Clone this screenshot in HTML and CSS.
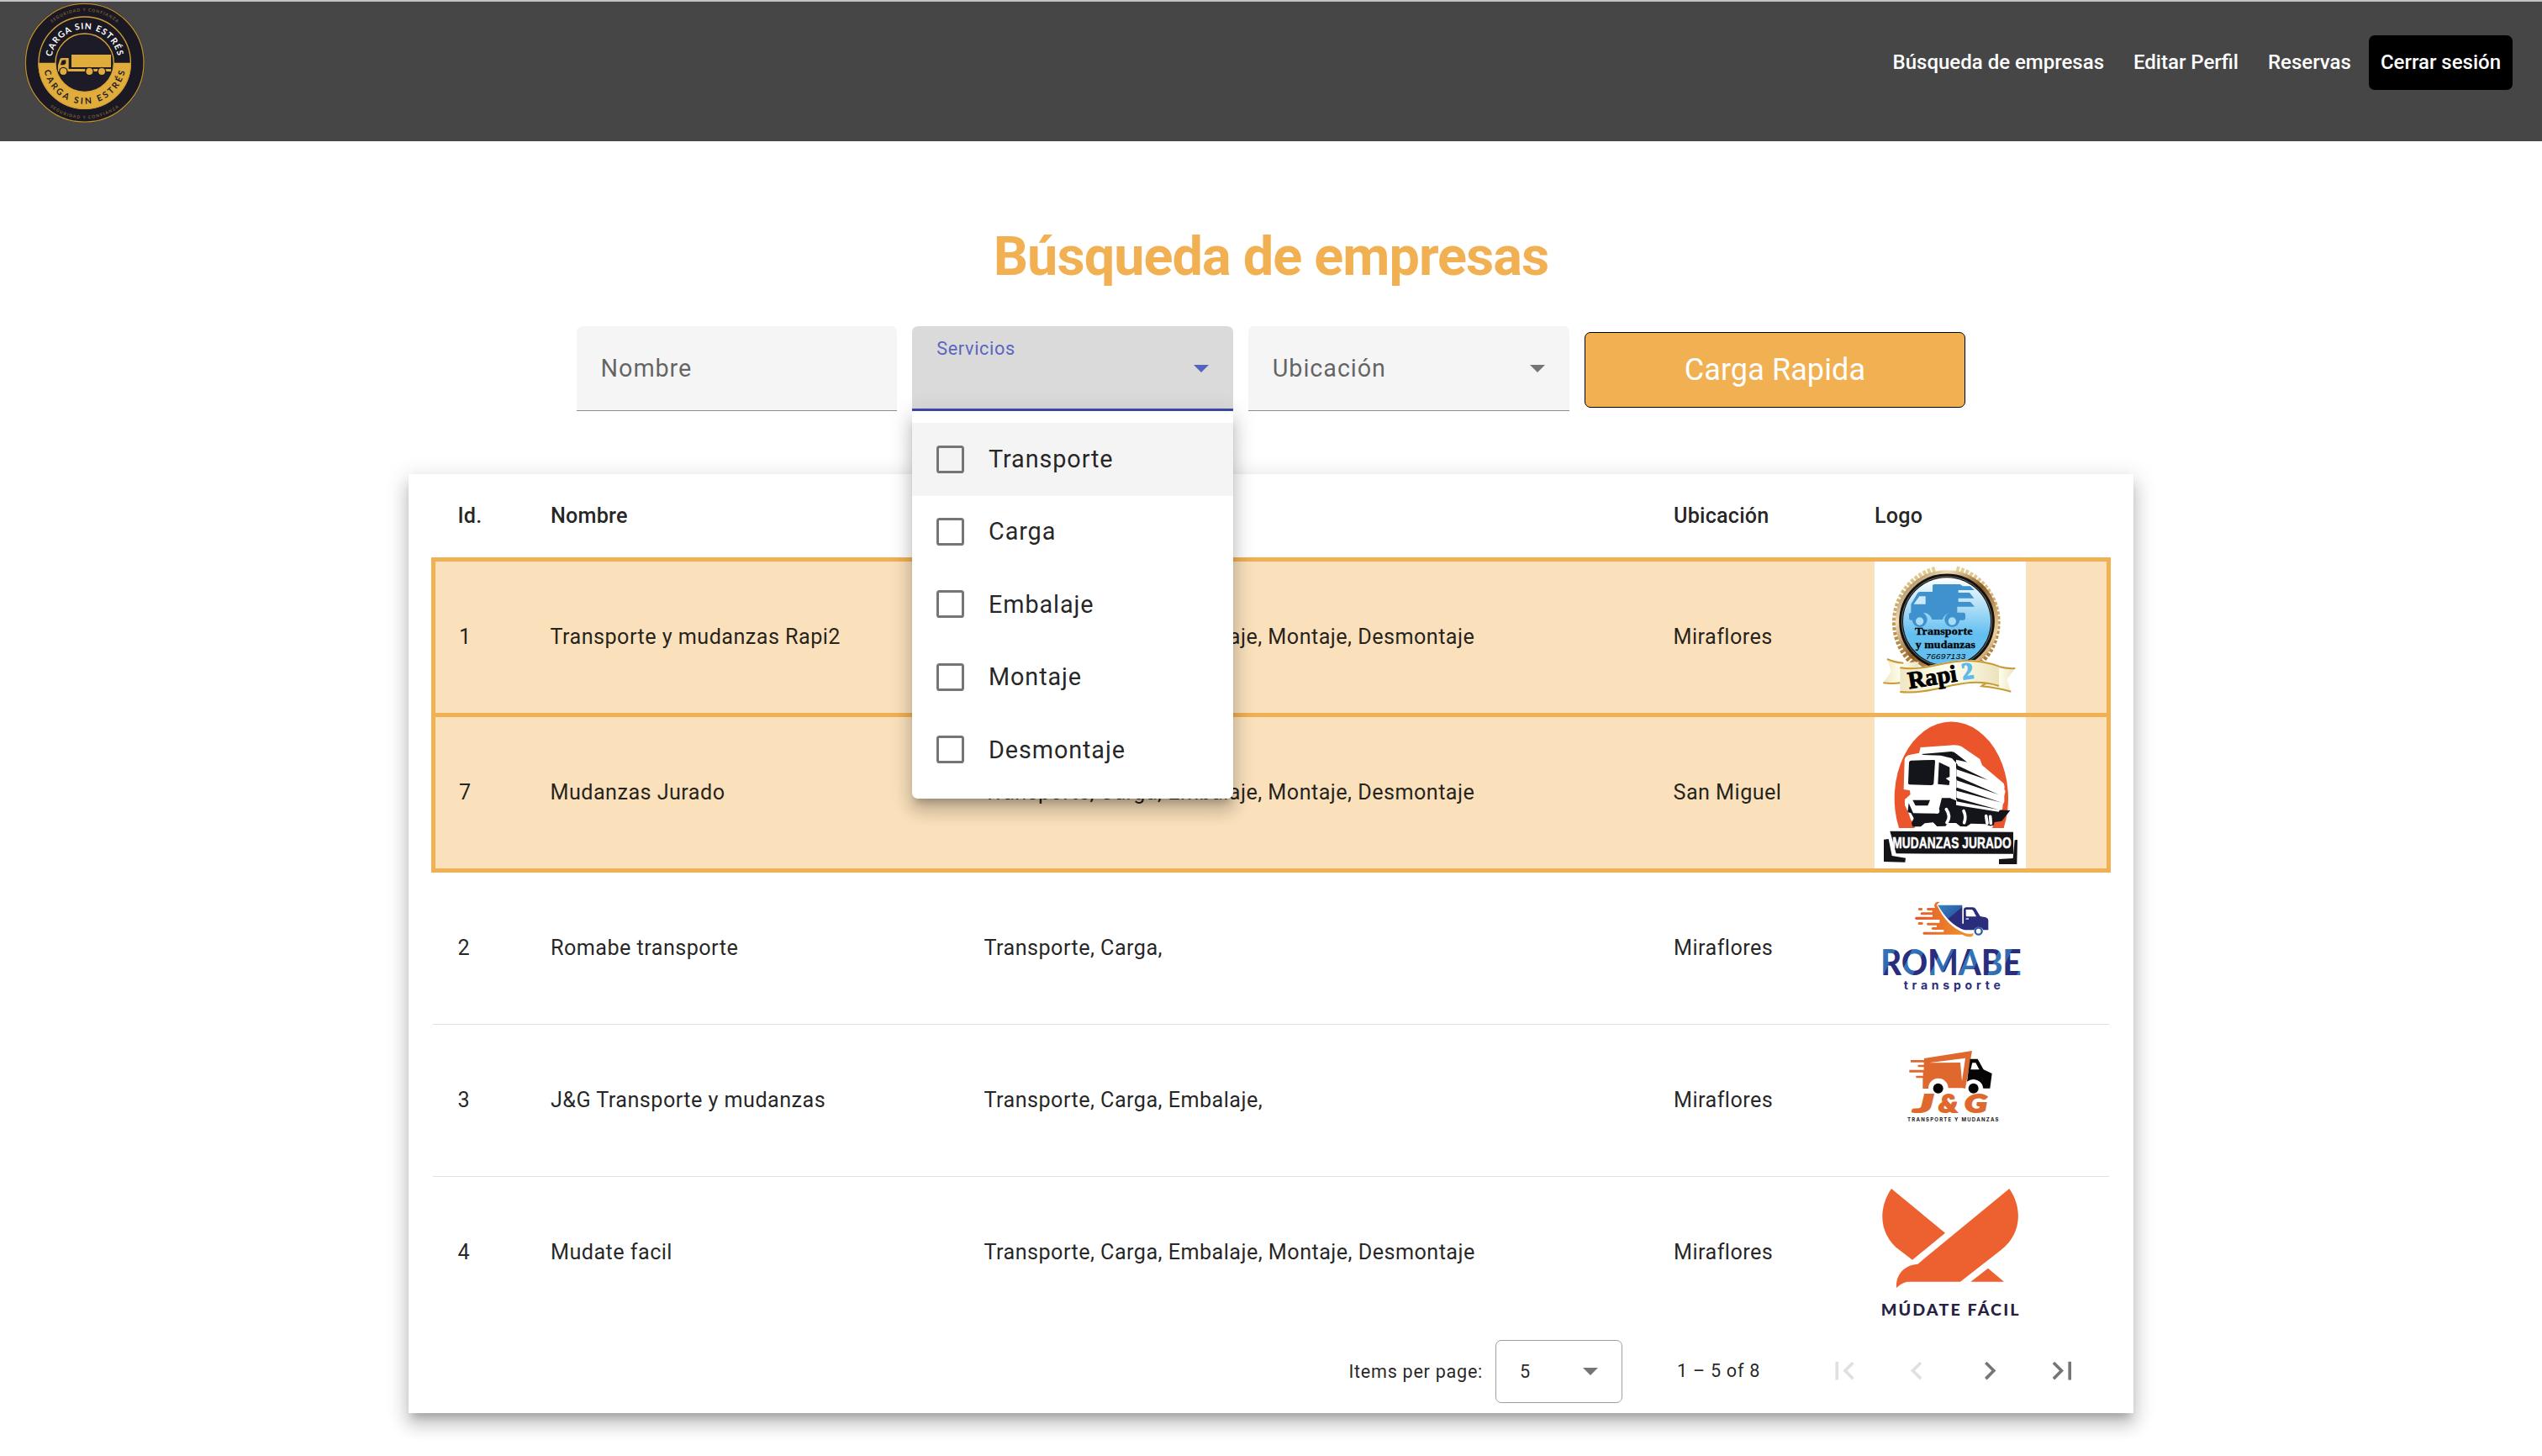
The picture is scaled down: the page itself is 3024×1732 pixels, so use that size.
FILE: index.html
```html
<!DOCTYPE html>
<html lang="es">
<head>
<meta charset="utf-8">
<title>Carga sin estrés</title>
<link rel="stylesheet" href="styles.css">
</head>
<body>
<header class="topbar">
  <svg class="brand" viewBox="88 9 430 430">
    <defs>
      <path id="arc-a" d="M185 202.1A120 120 0 0 1 421 202.1"/>
      <path id="arc-b" d="M158.7 252A147 147 0 0 0 447.3 252"/>
      <path id="arc-c" d="M186 82A184 184 0 0 1 420 82"/>
      <path id="arc-d" d="M180 381.6A200 200 0 0 0 426 381.6"/>
    </defs>
    <circle cx="303" cy="224" r="214" fill="#1a1823"/>
    <circle cx="303" cy="224" r="211" fill="none" stroke="#bd8f31" stroke-width="4"/>
    <path d="M137 224a166 166 0 0 0 332 0z" fill="#e0ac3b"/>
    <circle cx="303" cy="224" r="164" fill="none" stroke="#d09f37" stroke-width="4"/>
    <circle cx="303" cy="224" r="104" fill="#1d1b27" stroke="#d9a639" stroke-width="4"/>
    <g fill="#e0ac3b">
      <path d="M256 195h141v45H256zM215 211q2-4 8-4h23v39h59v9h-97v-22zM331 246h66v9h-66z"/>
      <path d="M217 230l5-15 14-1v13l-8 5h-12z" fill="#1d1b27"/>
      <g stroke="#1d1b27" stroke-width="4"><circle cx="227" cy="255" r="14"/><circle cx="320" cy="255" r="14"/><circle cx="364" cy="255" r="14"/></g>
    </g>
    <g font-family="Lato, sans-serif" font-weight="700">
      <text font-size="31" fill="#fff"><textPath href="#arc-a" textLength="330">CARGA SIN ESTRÉS</textPath></text>
      <text font-size="31" fill="#1d1b27"><textPath href="#arc-b" textLength="402">CARGA SIN ESTRÉS</textPath></text>
      <text font-size="15" fill="#7d602d"><textPath href="#arc-c" textLength="252">SEGURIDAD Y CONFIANZA</textPath></text>
      <text font-size="15" fill="#7d602d"><textPath href="#arc-d" textLength="263">SEGURIDAD Y CONFIANZA</textPath></text>
    </g>
  </svg>
  <nav class="nav">
    <a class="nav-link">Búsqueda de empresas</a>
    <a class="nav-link">Editar Perfil</a>
    <a class="nav-link">Reservas</a>
    <a class="nav-link nav-button">Cerrar sesión</a>
  </nav>
</header>

<main class="page">
  <h1 class="title">Búsqueda de empresas</h1>

  <form class="filters">
    <div class="field"><span class="label">Nombre</span></div>
    <div class="field active">
      <span class="label floating">Servicios</span>
      <svg class="arrow" viewBox="0 0 10 5"><path d="M0 0h10L5 5z"/></svg>
      <ul class="menu">
        <li class="option focused"><i class="check"></i><span>Transporte</span></li>
        <li class="option"><i class="check"></i><span>Carga</span></li>
        <li class="option"><i class="check"></i><span>Embalaje</span></li>
        <li class="option"><i class="check"></i><span>Montaje</span></li>
        <li class="option"><i class="check"></i><span>Desmontaje</span></li>
      </ul>
    </div>
    <div class="field">
      <span class="label">Ubicación</span>
      <svg class="arrow" viewBox="0 0 10 5"><path d="M0 0h10L5 5z"/></svg>
    </div>
    <button class="quick" type="button">Carga Rapida</button>
  </form>

  <section class="card">
    <div class="row head"><span>Id.</span><span>Nombre</span><span></span><span>Ubicación</span><span>Logo</span></div>

    <div class="row gold">
      <span class="id">1</span><span>Transporte y mudanzas Rapi2</span><span>Transporte, Carga, Embalaje, Montaje, Desmontaje</span><span>Miraflores</span>
      <svg class="logo" viewBox="90 54 540 540">
        <defs>
          <linearGradient id="sky" x1="0" y1="0" x2="0" y2="1"><stop offset="0" stop-color="#fff"/><stop offset=".65" stop-color="#62bff0"/></linearGradient>
          <linearGradient id="ring" x1="0" y1="0" x2="1" y2="1"><stop offset="0" stop-color="#7a4d1c"/><stop offset=".25" stop-color="#f3dfb4"/><stop offset=".5" stop-color="#8a5a26"/><stop offset=".8" stop-color="#efd09a"/><stop offset="1" stop-color="#7a4d1c"/></linearGradient>
          <linearGradient id="cream"><stop offset="0" stop-color="#efe7c2"/><stop offset=".5" stop-color="#fffff0"/><stop offset="1" stop-color="#ece3bd"/></linearGradient>
          <linearGradient id="wreath" x1="0" y1="0" x2="0" y2="1"><stop offset="0" stop-color="#e3cf92"/><stop offset="1" stop-color="#a9752f"/></linearGradient>
        </defs>
        <rect x="90" y="54" width="540" height="540" fill="#fff"/>
        <g fill="none" stroke="url(#wreath)">
          <path d="M240 428A192 196 0 0 1 312 80" stroke-width="20" stroke-dasharray="11 6"/>
          <path d="M455 425A192 196 0 0 0 382 80" stroke-width="20" stroke-dasharray="11 6"/>
        </g>
        <circle cx="348" cy="268" r="177" fill="#111" stroke="url(#ring)" stroke-width="13"/>
        <circle cx="348" cy="268" r="161" fill="none" stroke="#77736c" stroke-width="3"/>
        <circle cx="348" cy="268" r="156" fill="url(#sky)"/>
        <g fill="#3f92cd">
          <path d="M297 142q0-7 8-7h90l10 7h26l16 14h-58v9h40l16 20h-56v13h43l15 17h-62v21h22q7 0 7 8v11q0 8-8 8h-14a30 30 0 0 0-59-2h-38a30 30 0 0 0-59 2h-16q-7 0-7-8v-12q0-7 7-7v-30l24-40q4-4 10-4h43z"/>
          <path d="M230 206l20-28h22v28z" fill="#cdeafb"/>
          <circle cx="251" cy="261" r="27"/><circle cx="367" cy="261" r="27"/>
          <g fill="#a9dcf7"><circle cx="251" cy="267" r="14"/><circle cx="367" cy="267" r="14"/></g>
        </g>
        <g font-family="'Liberation Serif', serif" font-weight="700" fill="#050505" stroke="#050505">
          <text x="234" y="314" font-size="36" textLength="206" lengthAdjust="spacingAndGlyphs">Transporte</text>
          <text x="236" y="362" font-size="36" textLength="214" lengthAdjust="spacingAndGlyphs">y mudanzas</text>
        </g>
        <text x="273" y="401" font-family="'Liberation Sans', sans-serif" font-style="italic" font-size="29" textLength="142" lengthAdjust="spacingAndGlyphs">76697133</text>
        <g fill="url(#cream)">
          <path d="M135 402q50 18 112 10v72q-70 12-126 3l28-40z"/>
          <path d="M470 425q60 16 122 10l-30 40 15 45q-50-14-107-20z"/>
          <path d="M181 430c120 18 200-60 353-5v76c-130-42-220 34-353 21z"/>
        </g>
        <g fill="none" stroke="#c89a35" stroke-width="6">
          <path d="M135 402q25 12 58 14M121 487q30 4 60 0M534 429q30 8 58 6M577 518q-50-14-105-19l16-12"/>
          <path d="M181 433c120 18 200-60 353-5M181 519c133 13 223-63 353-21"/>
        </g>
        <g font-family="'Liberation Serif', serif" font-weight="700" transform="rotate(-9 300 470)">
          <text x="209" y="494" font-size="86" textLength="176" lengthAdjust="spacingAndGlyphs" stroke="#000" stroke-width="3">Rapi</text>
          <text x="403" y="492" font-size="84" fill="#5fb9ea" stroke="#5fb9ea" stroke-width="4">2</text>
        </g>
      </svg>
    </div>

    <div class="row gold">
      <span class="id">7</span><span>Mudanzas Jurado</span><span>Transporte, Carga, Embalaje, Montaje, Desmontaje</span><span>San Miguel</span>
      <svg class="logo" viewBox="90 609 540 540">
        <rect x="90" y="609" width="540" height="540" fill="#fff"/>
        <path d="M177 1005A203 273 0 1 1 551 1005Z" fill="#ea552b"/>
        <path d="M197 765q0-14 14-20l38-8 5-20 120-8q20 0 34 10l58 40 8 22 74 62q8 10 5 24l4 6-4 18v20l-5 10-2 18-22 16-14 50H232l8-14-20-14-8-24-14-30v-20l20-18-2-14-22-4z" fill="#fff"/>
        <path d="M213 770q2-6 8-6l80-2q6 0 5 6l-5 78q-1 6-8 6l-78-2q-6 0-5-6z" fill="#14151a"/>
        <path d="M258 741l106-9q10 0 18 8l60 47-61-26v153l138 26 55 2-30 38-26 4-2 10q-14 8-30-3l-52-2-16 11-22-1-15-12h-28l-10 11-30 1-14-14-30 3-14 12h-29l-4-12 8-18-10-18-12-4 4-32 16 36 88 1 14-55h29l26 10 1-130-20-22-40-10-62-2z" fill="#14151a"/>
        <path d="M320 770l38 18v34l-14 6 14 10-2 14-40-4z" fill="#14151a"/>
        <path d="M226 905h62l-8 20h-44z" fill="#14151a"/>
        <path d="M382 761l60 14 110 72-2 12zM382 792l168 85-3 14-165-68zM382 829l165 72-3 14-162-52zM382 869l162 52-4 14-158-38zM381 903l158 34-6 10-152-24z" fill="#fff"/>
        <path d="M383 780l112 54-112-38zM383 820l150 66-150-51zM383 860l160 54-160-42zM383 898l150 42-150-30z" fill="#14151a"/>
        <g fill="none" stroke="#fff" stroke-width="11" stroke-linecap="round"><path d="M346 938q18 26 2 48M408 944q10 20 2 42M488 962l4 26M503 964l2 24"/></g>
        <circle cx="313" cy="944" r="9" fill="#fff"/>
        <path d="M145 1016l440 3v78l-418-1zM123 1046l17-2 12 60 49 8-2 15-76-2zM590 1048l10-1-2 87h-64v-18l50-3z" fill="#131318"/>
        <text x="154" y="1077" font-family="'Liberation Sans', sans-serif" font-weight="700" font-size="57" fill="#fff" stroke="#fff" stroke-width="1.5" textLength="424" lengthAdjust="spacingAndGlyphs">MUDANZAS JURADO</text>
      </svg>
    </div>

    <div class="row">
      <span>2</span><span>Romabe transporte</span><span>Transporte, Carga,</span><span>Miraflores</span>
      <svg class="logo" viewBox="90 -6 540 540">
        <defs>
          <linearGradient id="blue" x1="0" y1="0" x2="1" y2=".6"><stop offset="0" stop-color="#3584c4"/><stop offset=".38" stop-color="#2f5fa9"/><stop offset=".4" stop-color="#2a2c7c"/><stop offset="1" stop-color="#2a2c7c"/></linearGradient>
          <linearGradient id="flame"><stop offset="0" stop-color="#e3592a"/><stop offset="1" stop-color="#f0982c"/></linearGradient>
          <linearGradient id="letters" gradientUnits="userSpaceOnUse" x1="120" y1="270" x2="205" y2="310" spreadMethod="repeat"><stop offset="0" stop-color="#3378bb"/><stop offset=".42" stop-color="#2f67ae"/><stop offset=".44" stop-color="#2a2c7c"/><stop offset="1" stop-color="#2a2c7c"/></linearGradient>
        </defs>
        <path d="M325 100Q314 101 314 112C335 160 370 195 410 209Q430 216 442 210Q444 218 438 222Q425 227 402 215H266Q258 211 266 206H337V198H297Q289 194 297 189H312V182H280Q272 178 280 173H322V162H238Q230 157 238 152H297V145H258Q250 141 258 136H296V129H280Q272 125 280 120H306Q300 108 308 101Q316 96 325 100Z" fill="url(#flame)"/>
        <g fill="#e5702a"><rect x="246" y="120" width="15" height="9" rx="4"/><rect x="245" y="171" width="18" height="9" rx="4"/></g>
        <path d="M316 110h87v66h5v-48q0-10 10-10h22q8 0 12 7l15 25 20 4q9 3 9 12v33h-18a18 18 0 0 0-33 0h-34q-54-18-95-89z" fill="url(#blue)" stroke="#fff" stroke-width="6" paint-order="stroke"/>
        <path d="M416 126h20q4 0 7 5l10 20h-33q-4 0-4-5z" fill="#fff"/>
        <path d="M416 159h10" stroke="#fff" stroke-width="4"/>
        <circle cx="461" cy="203" r="12" fill="#fff" stroke="#2b5ca5" stroke-width="7"/>
        <text x="112" y="359" font-family="Lato, sans-serif" font-weight="900" font-size="127" fill="url(#letters)" textLength="502" lengthAdjust="spacingAndGlyphs">ROMABE</text>
        <text x="194" y="412" font-family="Inter, sans-serif" font-weight="700" font-size="42" fill="#2b2f7e" textLength="346">transporte</text>
      </svg>
    </div>

    <div class="row">
      <span>3</span><span>J&amp;G Transporte y mudanzas</span><span>Transporte, Carga, Embalaje,</span><span>Miraflores</span>
      <svg class="logo" viewBox="90 538 540 540">
        <path d="M267 658l171-27-24 134h-4a37 37 0 0 0-7-1h-50a35 35 0 0 0-71 2h-20v-38h-24v-8h25v-12h-49v-9h52v-10h-21v-8h21v-9h-47v-8h48z" fill="#de682d"/>
        <path d="M284 674l130-17-12 82-6-66z" fill="#fff"/>
        <path d="M431 660h27l21 38 30 14-7 53h-24a36 36 0 0 0-58-24z" fill="#050505"/>
        <path d="M439 674h12l13 24h-31z" fill="#fff"/>
        <circle cx="317" cy="765" r="18" fill="#050505"/><circle cx="443" cy="765" r="18" fill="#050505"/>
        <g font-family="Lato, sans-serif" font-style="italic" font-weight="900" font-size="88" fill="#de682d" stroke="#de682d" stroke-width="6">
          <text x="230" y="851" textLength="70" lengthAdjust="spacingAndGlyphs">J</text>
          <text x="319" y="851" textLength="68" lengthAdjust="spacingAndGlyphs">&amp;</text>
          <text x="412" y="851" textLength="80" lengthAdjust="spacingAndGlyphs">G</text>
        </g>
        <text x="207" y="883" font-family="Inter, sans-serif" font-weight="700" font-size="18" fill="#1b1b1b" textLength="326">TRANSPORTE Y MUDANZAS</text>
      </svg>
    </div>

    <div class="row last">
      <span>4</span><span>Mudate facil</span><span>Transporte, Carga, Embalaje, Montaje, Desmontaje</span><span>Miraflores</span>
      <svg class="logo" viewBox="90 60 540 540">
        <g fill="#ec612f">
          <path d="M150 102L342 260 225 356 180 322C110 270 98 180 150 102z"/>
          <path d="M571 102C624 180 608 270 542 320L396 434H207Q186 438 168 456C164 410 196 374 244 371z"/>
          <path d="M495 386l57 48H433z"/>
        </g>
        <text x="113" y="556" font-family="Lato, sans-serif" font-weight="900" font-size="59" fill="#25233f" textLength="492">MÚDATE FÁCIL</text>
      </svg>
    </div>

    <footer class="paginator">
      <span class="per-page">Items per page:</span>
      <div class="size"><span>5</span><svg class="arrow" viewBox="0 0 10 5"><path d="M0 0h10L5 5z"/></svg></div>
      <span class="range">1 – 5 of 8</span>
      <svg class="step off" viewBox="0 0 24 24"><path d="M18.41 16.59L13.82 12l4.59-4.59L17 6l-6 6 6 6zM6 6h2v12H6z"/></svg>
      <svg class="step off" viewBox="0 0 24 24"><path d="M15.41 7.41L14 6l-6 6 6 6 1.41-1.41L10.83 12z"/></svg>
      <svg class="step" viewBox="0 0 24 24"><path d="M10 6L8.59 7.41 13.17 12l-4.58 4.59L10 18l6-6z"/></svg>
      <svg class="step" viewBox="0 0 24 24"><path d="M5.59 7.41L10.18 12l-4.59 4.59L7 18l6-6-6-6zM16 6h2v12h-2z"/></svg>
    </footer>
  </section>
</main>
</body>
</html>
```
FILE: styles.css
```css
* { box-sizing: border-box; }

body {
  margin: 0;
  background: #fff;
  color: rgba(0, 0, 0, .87);
  font-family: Roboto, sans-serif;
}

.topbar {
  display: flex;
  justify-content: space-between;
  height: 168px;
  padding: 1px 35px 0 29px;
  border-top: 2px solid #c4c4c6;
  background: #464646;
}

.brand { width: 143.4px; height: 143.4px; }

.nav { display: flex; gap: 35px; margin-top: 39px; height: 65px; }

.nav-link {
  color: #fff;
  font-size: 24px;
  font-weight: 500;
  line-height: 64px;
  white-space: nowrap;
}

.nav-button {
  margin-left: -14px;
  padding: 0 14px;
  border-radius: 7px;
  background: #000;
}

.page {
  display: flex;
  flex-direction: column;
  align-items: center;
  height: 1564px;
}

.title {
  margin: 99px 0 45px;
  color: #f1b052;
  font-size: 64.8px;
  font-weight: 700;
  line-height: 76px;
  letter-spacing: -1px;
}

.filters { display: flex; align-items: flex-start; gap: 18px; height: 101px; }

.field {
  position: relative;
  display: flex;
  align-items: center;
  justify-content: space-between;
  width: 381.6px;
  height: 101px;
  padding: 0 28.8px;
  border-bottom: 1.8px solid #8c8c8c;
  border-radius: 7px 7px 0 0;
  background: #f5f5f5;
}

.label {
  color: rgba(0, 0, 0, .6);
  font-size: 28.8px;
  line-height: 40px;
  letter-spacing: .9px;
}

.field.active { border-bottom: 3.6px solid #3f4cab; background: #dadada; }

.label.floating {
  align-self: flex-start;
  margin-top: 7px;
  color: #5a66bd;
  font-size: 21.6px;
  letter-spacing: .68px;
}

.arrow { width: 18px; height: 9px; fill: #757575; }
.field.active .arrow { fill: #5463bb; margin-top: 3px; }

.menu {
  position: absolute;
  z-index: 2;
  top: 101px;
  left: 0;
  width: 100%;
  margin: 0;
  padding: 14.4px 0;
  border-radius: 0 0 7px 7px;
  background: #fff;
  box-shadow: 0 9px 9px -5.4px rgba(0, 0, 0, .2), 0 14.4px 18px 1.8px rgba(0, 0, 0, .14), 0 5.4px 25.2px 3.6px rgba(0, 0, 0, .12);
  list-style: none;
}

.option {
  display: flex;
  align-items: center;
  gap: 28.8px;
  height: 86.4px;
  padding: 0 28.8px 1px;
  font-size: 28.8px;
  letter-spacing: .9px;
}

.option.focused { background: #f4f4f4; }

.check {
  width: 33px;
  height: 33px;
  border: 3px solid #757575;
  border-radius: 3.6px;
}

.quick {
  width: 453.6px;
  height: 90px;
  margin-top: 7px;
  padding: 0;
  border: 1px solid #000;
  border-radius: 7px;
  background: #f1b052;
  color: #fff;
  font: 400 36px Roboto, sans-serif;
  letter-spacing: .1px;
}

.card {
  flex: none;
  width: 2052px;
  height: 1117px;
  margin-top: 75px;
  padding: 0 27px;
  background: #fff;
  box-shadow: 0 9px 9px -5.4px rgba(0, 0, 0, .2), 0 14.4px 18px 1.8px rgba(0, 0, 0, .14), 0 5.4px 25.2px 3.6px rgba(0, 0, 0, .12);
}

.row {
  display: grid;
  grid-template-columns: 110.5px 515.5px 820.5px 239px 180px;
  align-items: center;
  height: 181px;
  margin: 0 2px;
  padding-left: 29.5px;
  border-bottom: 1.5px solid #e0e0e0;
  font-size: 25.2px;
  letter-spacing: .45px;
  white-space: nowrap;
}

.row > span { padding-bottom: 1px; }

.row.head {
  height: 99px;
  border: 0;
  font-weight: 500;
  letter-spacing: .2px;
}

.row.gold {
  height: 190px;
  margin: 0;
  padding-left: 26px;
  border: 5px solid #f1b052;
  background: #fae1bc;
}

.row .id { padding-left: 2px; }

.row.gold + .row.gold { margin-top: -5px; }
.row.last { height: 180px; border: 0; }

.logo { display: block; width: 180px; height: 180px; }

.paginator {
  display: flex;
  align-items: center;
  justify-content: flex-end;
  height: 101px;
  padding-right: 14.4px;
  font-size: 21.6px;
  letter-spacing: .72px;
}

.per-page { padding-top: 2px; }

.size {
  display: flex;
  align-items: center;
  justify-content: space-between;
  width: 151px;
  height: 75px;
  margin: 2px 65px 0 15px;
  padding: 0 28px;
  border: 1px solid #9e9e9e;
  border-radius: 7px;
}

.range { margin-right: 57px; }

.step { width: 86.4px; height: 43.2px; fill: #757575; }
.step.off { fill: #e0e0e0; }
```
